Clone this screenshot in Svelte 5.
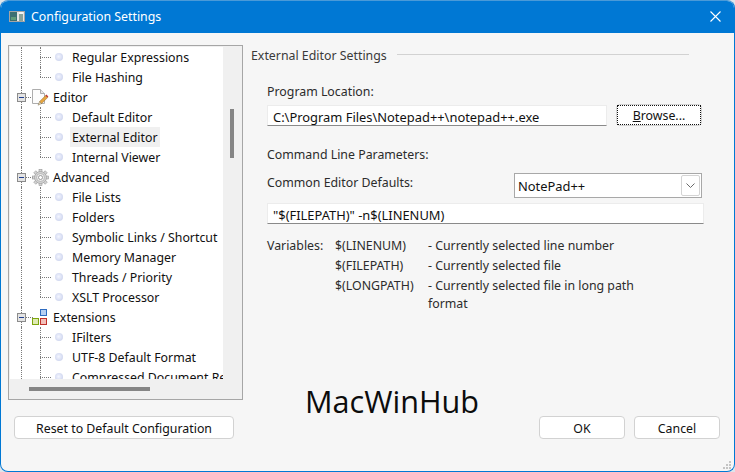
<script>
  const rows = [
    { t: 'leaf', label: 'Regular Expressions', top: true },
    { t: 'leaf', label: 'File Hashing', last: true },
    { t: 'parent', label: 'Editor', icon: 'editor' },
    { t: 'leaf', label: 'Default Editor', first: true },
    { t: 'leaf', label: 'External Editor', selected: true },
    { t: 'leaf', label: 'Internal Viewer', last: true },
    { t: 'parent', label: 'Advanced', icon: 'gear' },
    { t: 'leaf', label: 'File Lists', first: true },
    { t: 'leaf', label: 'Folders' },
    { t: 'leaf', label: 'Symbolic Links / Shortcut' },
    { t: 'leaf', label: 'Memory Manager' },
    { t: 'leaf', label: 'Threads / Priority' },
    { t: 'leaf', label: 'XSLT Processor', last: true },
    { t: 'parent', label: 'Extensions', icon: 'ext' },
    { t: 'leaf', label: 'IFilters', first: true },
    { t: 'leaf', label: 'UTF-8 Default Format' },
    { t: 'leaf', label: 'Compressed Document Reader' }
  ];
  const vars = [
    ['Variables:', '$(LINENUM)', '- Currently selected line number'],
    ['', '$(FILEPATH)', '- Currently selected file'],
    ['', '$(LONGPATH)', '- Currently selected file in long path format']
  ];
  const teeth = [0, 45, 90, 135, 180, 225, 270, 315];
</script>

<div class="window">
  <header class="titlebar">
    <svg class="appicon" width="16" height="11" viewBox="0 0 16 11">
      <rect x="0.5" y="0.5" width="15" height="10" fill="#e6e6e6" stroke="#a4a4a4" />
      <rect x="1" y="1" width="7" height="9" fill="#3c6f72" />
      <rect x="2" y="6" width="5" height="3" fill="#5f9a78" />
      <rect x="10" y="3" width="4" height="7" fill="#8aa39a" />
      <rect x="10" y="1" width="4" height="2" fill="#f4f4f4" />
    </svg>
    <span class="title">Configuration Settings</span>
    <svg class="close" width="11" height="11" viewBox="0 0 11 11">
      <path d="M0.5 0.5 L10.5 10.5 M10.5 0.5 L0.5 10.5" stroke="#fff" stroke-width="1.1" fill="none" />
    </svg>
  </header>

  <div class="body">
    <div class="main">
      <div class="treebox">
        <div class="treetop">
          <div class="tree">
            {#each rows as r}
              <div class="row {r.t}">
                <span class="rootline"></span>
                {#if r.t === 'leaf'}
                  <span class="vline" class:last={r.last}></span>
                  <span class="hline"></span>
                  <span class="bullet"></span>
                  <span class="label" class:selected={r.selected}>{r.label}</span>
                {:else}
                  <span class="expander"><span class="minus"></span></span>
                  <span class="phline"></span>
                  <span class="picon">
                    {#if r.icon === 'editor'}
                      <svg width="17" height="17" viewBox="0 0 17 17">
                        <path d="M0.5 0.5 H8.5 L12.5 4.5 V14.5 H0.5 Z" fill="#fcfcfc" stroke="#adadad" />
                        <path d="M8.5 0.5 V4.5 H12.5" fill="#e8e8e8" stroke="#adadad" />
                        <path d="M7.6 12.6 L13.6 6.6 L15.6 8.6 L9.6 14.6 Z" fill="#e6a63f" stroke="#91652a" stroke-width="0.5" />
                        <path d="M13.4 6.4 L14.4 5.4 L16.4 7.4 L15.4 8.4 Z" fill="#c23b32" />
                        <path d="M7.6 12.6 L6 16.2 L9.6 14.6 Z" fill="#e8d6b0" stroke="#6b5a3a" stroke-width="0.4" />
                      </svg>
                    {:else if r.icon === 'gear'}
                      <svg width="17" height="17" viewBox="0 0 17 17">
                        <g fill="#d4d4d4" stroke="#8a8a8a" stroke-width="0.5">
                          {#each teeth as a}
                            <rect x="7" y="0.4" width="3" height="3.4" transform="rotate({a} 8.5 8.5)" />
                          {/each}
                          <circle cx="8.5" cy="8.5" r="6" />
                        </g>
                        <circle cx="8.5" cy="8.5" r="4" fill="#ececec" stroke="#a8a8a8" stroke-width="0.7" />
                        <circle cx="8.5" cy="8.5" r="2" fill="#fff" stroke="#8a8a8a" stroke-width="0.8" />
                      </svg>
                    {:else}
                      <svg width="17" height="17" viewBox="0 0 17 17" class="exticon">
                        <rect x="8.5" y="0.5" width="6" height="6" fill="#b6cff2" stroke="#2f6cc0" />
                        <rect x="0.5" y="9.5" width="6" height="6" fill="#dfeab4" stroke="#7da60e" />
                        <rect x="8.5" y="9.5" width="6" height="6" fill="#f2c0ba" stroke="#c0302a" />
                      </svg>
                    {/if}
                  </span>
                  <span class="plabel">{r.label}</span>
                {/if}
              </div>
            {/each}
          </div>
          <div class="vscroll"><span class="vthumb"></span></div>
        </div>
        <div class="hscroll"><span class="hthumb"></span></div>
      </div>

      <section class="panel">
        <div class="heading">
          <span>External Editor Settings</span>
          <span class="rule"></span>
        </div>

        <div class="form">
          <div class="lbl first">Program Location:</div>
          <div class="pathrow">
            <div class="input path">C:\Program Files\Notepad++\notepad++.exe</div>
            <button class="btn browse"><span class="focus"><u>B</u>rowse...</span></button>
          </div>
          <div class="lbl cmd">Command Line Parameters:</div>
          <div class="comborow">
            <div class="lbl common">Common Editor Defaults:</div>
            <div class="combo">
              <span>NotePad++</span>
              <span class="arrow">
                <svg width="9" height="5" viewBox="0 0 9 5"><path d="M0.5 0.5 L4.5 4.5 L8.5 0.5" fill="none" stroke="#6a6a6a" /></svg>
              </span>
            </div>
          </div>
          <div class="input params">"$(FILEPATH)" -n$(LINENUM)</div>
          <div class="vars">
            {#each vars as v}
              <span>{v[0]}</span><span>{v[1]}</span><span>{v[2]}</span>
            {/each}
          </div>
        </div>
      </section>
    </div>

    <footer class="footer">
      <button class="btn reset">Reset to Default Configuration</button>
      <span class="mark">MacWinHub</span>
      <span class="spacer"></span>
      <button class="btn action">OK</button>
      <button class="btn action">Cancel</button>
    </footer>
  </div>

  <svg class="grip" width="8" height="8" viewBox="0 0 8 8" fill="#c4c4c4">
    <rect x="6" y="0" width="2" height="2" />
    <rect x="3" y="3" width="2" height="2" /><rect x="6" y="3" width="2" height="2" />
    <rect x="0" y="6" width="2" height="2" /><rect x="3" y="6" width="2" height="2" /><rect x="6" y="6" width="2" height="2" />
  </svg>
</div>

<style>
  :global(body) {
    margin: 0;
    background: #dfe5ea;
  }
  .window {
    position: relative;
    width: 735px;
    height: 472px;
    box-sizing: border-box;
    overflow: hidden;
    background: #f6f6f6;
    border: 1px solid #0078d4;
    border-top-color: #4a9ad8;
    border-radius: 8px;
    font-family: "Noto Sans", "Open Sans", sans-serif;
    font-size: 12.35px;
    color: #101010;
  }
  .titlebar {
    height: 32px;
    box-sizing: border-box;
    padding: 0 0 2px 8px;
    background: #0078d4;
    display: flex;
    align-items: center;
    color: #fff;
  }
  .appicon { margin-right: 6px; }
  .close { margin-left: auto; margin-right: 13px; }
  .body {
    padding: 12px 14px 0 7px;
  }
  .main {
    display: flex;
    height: 355px;
  }
  .treebox {
    width: 235px;
    height: 355px;
    box-sizing: border-box;
    border: 1px solid #a6a6a6;
    padding: 1px;
    background: #f0f0f0;
    flex: none;
  }
  .treetop {
    display: flex;
    height: 332px;
  }
  .tree {
    width: 213px;
    height: 332px;
    overflow: hidden;
    background: #fff;
  }
  .row {
    position: relative;
    height: 20px;
    white-space: nowrap;
  }
  .rootline {
    position: absolute;
    left: 11px;
    top: 0;
    height: 20px;
    border-left: 1px dotted #7a7a7a;
  }
  .vline {
    position: absolute;
    left: 30px;
    top: 0;
    height: 20px;
    border-left: 1px dotted #7a7a7a;
  }
  .vline.last { height: 10px; }
  .hline {
    position: absolute;
    left: 30px;
    top: 10px;
    width: 11px;
    border-top: 1px dotted #7a7a7a;
  }
  .bullet {
    position: absolute;
    left: 45px;
    top: 6px;
    width: 8px;
    height: 8px;
    border-radius: 50%;
    background: radial-gradient(circle at 45% 45%, #f4f6ff 0%, #d6dcf2 60%, #c3cce8 100%);
  }
  .label {
    position: absolute;
    left: 60px;
    top: 0;
    height: 20px;
    line-height: 22px;
    padding: 0 2px;
  }
  .label.selected { background: #f0f0f0; }
  .expander {
    position: absolute;
    left: 7px;
    top: 6px;
    width: 7px;
    height: 7px;
    border: 1px solid #8c8c8c;
    background: #e4e4e4;
    display: flex;
    align-items: center;
    justify-content: center;
    z-index: 1;
  }
  .minus {
    width: 5px;
    height: 1px;
    background: #1f3f8f;
  }
  .phline {
    position: absolute;
    left: 16px;
    top: 10px;
    width: 7px;
    border-top: 1px dotted #7a7a7a;
  }
  .picon {
    position: absolute;
    left: 22px;
    top: 2px;
    width: 17px;
    height: 17px;
  }
  .plabel {
    position: absolute;
    left: 43px;
    top: 0;
    line-height: 22px;
  }
  .vscroll {
    width: 18px;
    background: #f0f0f0;
    padding: 62px 0 0 7px;
    box-sizing: border-box;
  }
  .vthumb {
    display: block;
    width: 4px;
    height: 49px;
    background: #858585;
  }
  .hscroll {
    height: 18px;
    box-sizing: border-box;
    padding: 8px 0 0 19px;
    background: #f0f0f0;
  }
  .hthumb {
    display: block;
    width: 121px;
    height: 4px;
    background: #858585;
  }
  .panel {
    flex: 1;
    padding-left: 8px;
    color: #2c2c2c;
  }
  .heading {
    display: flex;
    align-items: center;
    gap: 10px;
    height: 20px;
    margin-right: 31px;
    color: #3a3a3a;
  }
  .rule {
    flex: 1;
    height: 1px;
    background: #d2d2d2;
    margin-top: -1px;
  }
  .form {
    padding-left: 16px;
  }
  .lbl {
    line-height: 18px;
    white-space: nowrap;
  }
  .lbl.first { margin-top: 18px; }
  .lbl.cmd { margin-top: 20px; }
  .lbl.common { margin-top: 1px; }
  .input {
    box-sizing: border-box;
    height: 21px;
    line-height: 22px;
    font-size: 12.9px;
    background: #fff;
    border: 1px solid #ececec;
    border-bottom-color: #8a8a8a;
    padding-left: 5px;
    color: #111;
    white-space: nowrap;
  }
  .pathrow {
    display: flex;
    align-items: flex-end;
    gap: 9px;
    margin-top: 3px;
  }
  .path { width: 340px; }
  .btn {
    font: inherit;
    color: #111;
    background: #fff;
    border: 1px solid #d2d2d2;
    border-radius: 4px;
    padding: 0;
    box-sizing: border-box;
  }
  .browse {
    width: 86px;
    height: 22px;
  }
  .focus {
    display: flex;
    height: 100%;
    box-sizing: border-box;
    align-items: center;
    justify-content: center;
    padding-top: 1px;
    border: 1px dotted #111;
  }
  .comborow {
    display: flex;
    justify-content: space-between;
    align-items: flex-start;
    width: 435px;
    margin-top: 9px;
  }
  .combo {
    box-sizing: border-box;
    width: 188px;
    height: 25px;
    line-height: 26px;
    border: 1px solid #a8a8a8;
    background: #fff;
    display: flex;
    align-items: center;
    justify-content: space-between;
    padding: 0 1px 0 3px;
    color: #111;
    font-size: 12.9px;
  }
  .arrow {
    box-sizing: border-box;
    width: 19px;
    height: 21px;
    border: 1px solid #d4d4d4;
    border-radius: 2px;
    display: flex;
    align-items: center;
    justify-content: center;
  }
  .params {
    width: 437px;
    margin-top: 5px;
  }
  .vars {
    display: grid;
    grid-template-columns: 68px 93px 222px;
    grid-auto-rows: auto;
    row-gap: 2px;
    margin-top: 13px;
    line-height: 18px;
  }
  .footer {
    position: relative;
    display: flex;
    align-items: center;
    gap: 9px;
    margin-top: 16px;
    padding-left: 6px;
  }
  .reset {
    width: 220px;
    height: 23px;
    padding-top: 1px;
  }
  .action {
    width: 86px;
    height: 23px;
    padding-top: 1px;
  }
  .spacer { flex: 1; }
  .mark {
    position: absolute;
    left: 297px;
    top: -33px;
    font-family: "Open Sans", "Noto Sans", sans-serif;
    font-size: 30.6px;
    line-height: 36px;
    color: #0c0c0c;
  }
  .grip {
    position: absolute;
    right: 3px;
    bottom: 2px;
  }
</style>
